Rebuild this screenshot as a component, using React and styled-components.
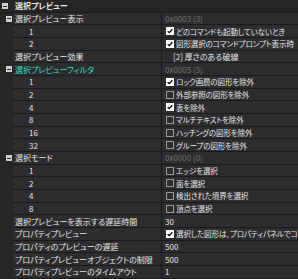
import React from "react";
import styled, { createGlobalStyle } from "styled-components";

const Global = createGlobalStyle`
  html, body { margin: 0; padding: 0; background: #2d2d30; }
  body { font-family: "Noto Sans CJK JP", "Noto Sans", sans-serif; }
`;

const Grid = styled.div`
  width: 298px;
  height: 279px;
  overflow: hidden;
  display: flex;
  flex-direction: column;
  background: #2d2d30;
  font-size: 8px;
  font-feature-settings: "palt";
  color: #e6e6e6;
`;

const Row = styled.div`
  display: grid;
  grid-template-columns: 13px 148px 1fr;
  height: 12.68px;
  flex: none;
  background: ${(p) => (p.$header ? "#252526" : "#2d2d30")};
`;

const Gutter = styled.div`
  position: relative;
  background: #252526;
  border-bottom: ${(p) => (p.$header ? "1px solid #1b1b1c" : "none")};
`;

const Cell = styled.div`
  display: flex;
  align-items: center;
  gap: 2px;
  padding-left: ${(p) => p.$pad || 2}px;
  border-bottom: 1px solid #1b1b1c;
  white-space: nowrap;
  overflow: hidden;
  font-weight: ${(p) => (p.$bold ? 700 : 400)};
  color: ${(p) => p.$color || "#e6e6e6"};
`;

const ValueCell = styled(Cell)`
  border-left: 1px solid #1b1b1c;
`;

const CheckText = styled.span`
  font-size: 7.5px;
  letter-spacing: -0.1px;
`;

const Minus = styled.span`
  position: absolute;
  top: 3px;
  left: ${(p) => p.$left}px;
  width: 6px;
  height: 6px;
  background: #d0d0d0;
  box-sizing: border-box;
  &::after {
    content: "";
    position: absolute;
    left: 1px;
    right: 1px;
    top: 2.5px;
    height: 1px;
    background: #2a2a2a;
  }
`;

const Box = styled.span`
  width: 8px;
  height: 8px;
  box-sizing: border-box;
  flex: none;
  display: inline-flex;
  align-items: center;
  justify-content: center;
  background: ${(p) => (p.$on ? "#ffffff" : "transparent")};
  border: 1px solid ${(p) => (p.$on ? "#ffffff" : "#9a9a9a")};
`;

const Check = () => (
  <svg width="7" height="6" viewBox="0 0 7 6">
    <path d="M0.8 3.1 L2.6 4.9 L6.2 0.9" fill="none" stroke="#000" strokeWidth="1.5" />
  </svg>
);

const rows = [
  { header: true, icon: 2, name: "選択プレビュー", bold: true },
  { icon: 6, name: "選択プレビュー表示", value: { dim: "0x0003 (3)" } },
  { name: "1", pad: 16, value: { check: true, text: "どのコマンドも起動していないとき" } },
  { name: "2", pad: 16, value: { check: true, text: "図形選択のコマンドプロンプト表示時" } },
  { name: "選択プレビュー効果", value: { text: "[2] 厚さのある破線", pad: 11 } },
  { icon: 6, name: "選択プレビューフィルタ", color: "#35dcc0", value: { dim: "0x0005 (5)" } },
  { name: "1", pad: 16, value: { check: true, text: "ロック画層の図形を除外" } },
  { name: "2", pad: 16, value: { check: false, text: "外部参照の図形を除外" } },
  { name: "4", pad: 16, value: { check: true, text: "表を除外" } },
  { name: "8", pad: 16, value: { check: false, text: "マルチテキストを除外" } },
  { name: "16", pad: 16, value: { check: false, text: "ハッチングの図形を除外" } },
  { name: "32", pad: 16, value: { check: false, text: "グループの図形を除外" } },
  { icon: 6, name: "選択モード", value: { dim: "0x0000 (0)" } },
  { name: "1", pad: 16, value: { check: false, text: "エッジを選択" } },
  { name: "2", pad: 16, value: { check: false, text: "面を選択" } },
  { name: "4", pad: 16, value: { check: false, text: "検出された境界を選択" } },
  { name: "8", pad: 16, value: { check: false, text: "頂点を選択" } },
  { name: "選択プレビューを表示する遅延時間", value: { text: "30" } },
  { name: "プロパティプレビュー", value: { check: true, text: "選択した図形は、プロパティパネルでコントロールされます" } },
  { name: "プロパティのプレビューの遅延", value: { text: "500" } },
  { name: "プロパティプレビューオブジェクトの制限", value: { text: "500" } },
  { name: "プロパティプレビューのタイムアウト", value: { text: "1" } },
];

const Value = ({ v }) => {
  if (v.dim) return <ValueCell $pad={3} $color="#707070">{v.dim}</ValueCell>;
  if (v.check !== undefined)
    return (
      <ValueCell $pad={4}>
        <Box $on={v.check}>{v.check && <Check />}</Box>
        <CheckText>{v.text}</CheckText>
      </ValueCell>
    );
  return <ValueCell $pad={v.pad || 3}>{v.text}</ValueCell>;
};

export default function App() {
  return (
    <>
      <Global />
      <Grid>
        {rows.map((r, i) => (
          <Row key={i} $header={r.header}>
            <Gutter $header={r.header}>{r.icon !== undefined && <Minus $left={r.icon} />}</Gutter>
            <Cell $pad={r.pad || 2} $bold={r.bold} $color={r.color}>
              {r.name}
            </Cell>
            {r.header ? <Cell /> : <Value v={r.value} />}
          </Row>
        ))}
      </Grid>
    </>
  );
}
